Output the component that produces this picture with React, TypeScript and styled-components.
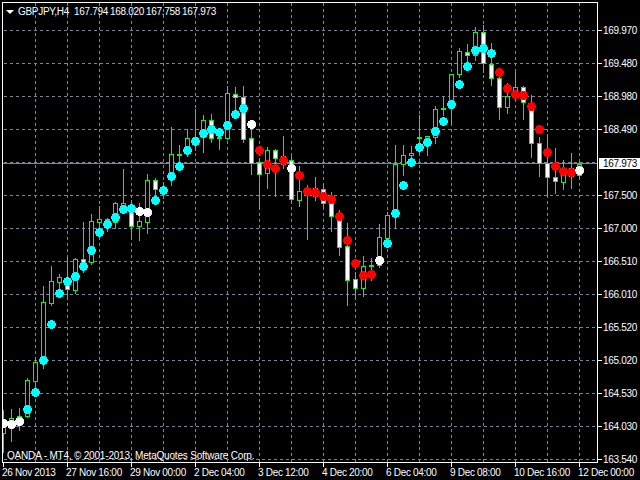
import React from "react";
import styled, { createGlobalStyle } from "styled-components";

const Global = createGlobalStyle`
  html, body { margin: 0; padding: 0; background: #000; }
  #root { width: 640px; height: 480px; overflow: hidden; }
`;

const Terminal = styled.div`
  width: 640px;
  height: 480px;
  background: #000;
  color: #fff;
  display: grid;
  grid-template-columns: 598px 42px;
  grid-template-rows: 463px 17px;
  font-family: "Liberation Sans", Arial, sans-serif;
  font-size: 10px;
  line-height: 11px;
  letter-spacing: -0.3px;
  overflow: hidden;
`;

const Plot = styled.div`
  position: relative;
  margin: 2px 0 0 2px;
  border: 1px solid #fff;
  width: 594px;
  height: 459px;
`;

const PlotSvg = styled.svg`
  display: block;
`;

const Legend = styled.div`
  position: absolute;
  left: 3px;
  top: 3px;
  display: flex;
  align-items: center;
  white-space: nowrap;
`;

const Triangle = styled.span`
  width: 0;
  height: 0;
  border-left: 4px solid transparent;
  border-right: 4px solid transparent;
  border-top: 4px solid #fff;
  margin-right: 4px;
`;

const Symbol = styled.span`
  width: 56px;
`;

const Quote = styled.span`
  width: 36px;
`;

const Copyright = styled.div`
  position: absolute;
  left: 4px;
  bottom: 1px;
  white-space: nowrap;
  letter-spacing: -0.19px;
`;

const PriceAxis = styled.div`
  display: flex;
  flex-direction: column;
  padding-top: 14px;
`;

const PriceRow = styled.div<{ $current?: boolean }>`
  height: 33px;
  flex: none;
  box-sizing: border-box;
  display: flex;
  align-items: center;
  padding-top: ${(p) => (p.$current ? "2px" : "0")};
`;

const PriceTick = styled.span`
  width: 4px;
  height: 1px;
  background: #fff;
  margin-right: 1px;
  flex: none;
`;

const PriceLabel = styled.span``;

const CurrentPrice = styled.span`
  margin-left: 1px;
  width: 41px;
  height: 11px;
  padding-left: 4px;
  box-sizing: border-box;
  background: #fff;
  color: #000;
`;

const TimeAxis = styled.div`
  grid-column: 1 / span 2;
  display: flex;
  padding-left: 3px;
`;

const TimeCell = styled.div`
  width: 64px;
  flex: none;
  display: flex;
  flex-direction: column;
`;

const TimeTick = styled.span`
  width: 1px;
  height: 4px;
  background: #fff;
`;

const TimeLabel = styled.span`
  margin: 0 0 0 -1px;
  white-space: nowrap;
`;

type Row = [number, number, number, number, "h" | "w", number, "c" | "r" | "w"];

// high, low, body top, body bottom, body kind, marker y, marker colour
const bars: Row[] = [
  [410, 452, 420, 433, "h", 423, "w"],
  [409, 441, 418, 428, "h", 424, "w"],
  [408, 430, 416, 425, "h", 421, "w"],
  [378, 417, 380, 416, "h", 409, "c"],
  [357, 392, 362, 381, "h", 392, "c"],
  [286, 368, 302, 363, "h", 360, "c"],
  [266, 305, 281, 303, "h", 324, "c"],
  [274, 293, 277, 282, "h", 293, "c"],
  [257, 299, 284, 289, "w", 281, "c"],
  [258, 293, 259, 290, "h", 276, "c"],
  [222, 272, 259, 262, "w", 266, "c"],
  [214, 264, 221, 262, "h", 250, "c"],
  [206, 235, 219, 222, "h", 232, "c"],
  [218, 231, 219, 227, "h", 224, "c"],
  [202, 228, 203, 222, "h", 217, "c"],
  [169, 210, 203, 205, "h", 209, "c"],
  [200, 239, 205, 226, "w", 208, "c"],
  [203, 240, 221, 226, "h", 211, "w"],
  [174, 233, 180, 222, "h", 212, "w"],
  [178, 197, 180, 189, "w", 200, "c"],
  [182, 198, 188, 192, "h", 190, "c"],
  [127, 185, 154, 172, "h", 176, "c"],
  [145, 170, 154, 155, "h", 166, "c"],
  [129, 156, 138, 150, "h", 150, "c"],
  [109, 150, 137, 138, "h", 141, "c"],
  [115, 152, 120, 137, "h", 133, "c"],
  [114, 142, 120, 138, "w", 129, "c"],
  [128, 149, 137, 138, "h", 132, "c"],
  [86, 139, 93, 138, "h", 125, "c"],
  [87, 114, 94, 97, "w", 114, "c"],
  [86, 142, 97, 139, "w", 108, "c"],
  [120, 174, 138, 163, "w", 124, "w"],
  [158, 208, 162, 174, "w", 150, "r"],
  [147, 188, 150, 173, "h", 164, "r"],
  [149, 196, 150, 158, "w", 168, "r"],
  [136, 168, 156, 164, "h", 160, "r"],
  [156, 203, 160, 199, "w", 168, "w"],
  [166, 206, 191, 200, "h", 175, "r"],
  [185, 239, 188, 194, "h", 191, "r"],
  [177, 200, 188, 196, "h", 192, "r"],
  [183, 207, 189, 203, "w", 196, "r"],
  [192, 231, 203, 216, "w", 199, "r"],
  [210, 255, 219, 247, "w", 216, "r"],
  [223, 305, 246, 280, "w", 240, "r"],
  [272, 299, 279, 288, "w", 263, "r"],
  [256, 296, 266, 288, "h", 275, "r"],
  [258, 280, 265, 266, "h", 274, "r"],
  [224, 267, 237, 265, "h", 260, "w"],
  [212, 245, 215, 238, "h", 243, "c"],
  [145, 228, 164, 210, "h", 213, "c"],
  [145, 175, 155, 164, "h", 185, "c"],
  [146, 165, 153, 155, "h", 162, "c"],
  [115, 152, 137, 138, "h", 147, "c"],
  [136, 155, 136, 138, "h", 142, "c"],
  [106, 143, 109, 137, "h", 131, "c"],
  [96, 115, 108, 109, "h", 121, "c"],
  [74, 124, 74, 108, "h", 104, "c"],
  [48, 77, 51, 74, "h", 84, "c"],
  [44, 66, 52, 55, "w", 66, "c"],
  [27, 60, 32, 55, "h", 50, "c"],
  [25, 72, 32, 63, "w", 48, "c"],
  [43, 85, 64, 78, "w", 53, "c"],
  [68, 119, 78, 107, "w", 72, "r"],
  [83, 113, 96, 107, "h", 88, "r"],
  [72, 97, 87, 95, "h", 94, "r"],
  [86, 119, 87, 102, "w", 95, "r"],
  [95, 157, 107, 143, "w", 106, "r"],
  [137, 176, 143, 163, "w", 129, "r"],
  [134, 196, 163, 177, "w", 152, "r"],
  [148, 193, 177, 181, "w", 166, "r"],
  [160, 189, 175, 182, "h", 171, "r"],
  [153, 188, 168, 176, "h", 172, "r"],
  [161, 179, 164, 175, "h", 170, "w"],
];

const dotFill = { c: "#00ffff", r: "#ff0000", w: "#ffffff" };
const GRID = "#778899";

const levels = [30, 63, 96, 129, 162, 195, 228, 261, 294, 327, 360, 393, 426, 459];
const columns = Array.from({ length: 18 }, (_, i) => 35 + 32 * i);

const Chart = () => (
  <PlotSvg width={594} height={459} viewBox="3 3 594 459" shapeRendering="crispEdges">
    <g stroke={GRID} strokeWidth={1} strokeDasharray="3 3">
      {levels.map((y) => (
        <line key={y} x1={4} x2={597} y1={y + 0.5} y2={y + 0.5} />
      ))}
      {columns.map((x) => (
        <line key={x} x1={x + 0.5} x2={x + 0.5} y1={3} y2={462} />
      ))}
    </g>
    <line x1={3} x2={597} y1={163.5} y2={163.5} stroke={GRID} />
    {bars.map(([hi, lo, top, bottom, kind], i) => {
      const x = 3 + 8 * i;
      return (
        <g key={x}>
          <line x1={x + 0.5} x2={x + 0.5} y1={hi} y2={lo + 1} stroke="#00ff00" />
          <rect
            x={x - 1.5}
            y={top + 0.5}
            width={4}
            height={bottom - top}
            fill={kind === "w" ? "#fff" : "#000"}
            stroke="#00ff00"
          />
        </g>
      );
    })}
    {bars.map(([, , , , , y, c], i) =>
      c === "w" ? (
        <circle key={`f${i}`} cx={4 + 8 * i} cy={y + 0.5} r={4.4} fill="#ffb090" />
      ) : null
    )}
    {bars.map(([, , , , , y, c], i) => (
      <circle key={i} cx={3.5 + 8 * i} cy={y + 0.5} r={4.4} fill={dotFill[c]} />
    ))}
  </PlotSvg>
);

const prices: { text: string; current?: boolean }[] = [
  { text: "169.970" },
  { text: "169.480" },
  { text: "168.980" },
  { text: "168.490" },
  { text: "167.973", current: true },
  { text: "167.500" },
  { text: "167.000" },
  { text: "166.510" },
  { text: "166.010" },
  { text: "165.520" },
  { text: "165.020" },
  { text: "164.530" },
  { text: "164.030" },
  { text: "163.540" },
];

const times = [
  "26 Nov 2013",
  "27 Nov 16:00",
  "29 Nov 00:00",
  "2 Dec 04:00",
  "3 Dec 12:00",
  "4 Dec 20:00",
  "6 Dec 04:00",
  "9 Dec 08:00",
  "10 Dec 16:00",
  "12 Dec 00:00",
];

export default function App() {
  return (
    <>
      <Global />
      <Terminal>
        <Plot>
          <Chart />
          <Legend>
            <Triangle />
            <Symbol>GBPJPY,H4</Symbol>
            {["167.794", "168.020", "167.758", "167.973"].map((q, i) => (
              <Quote key={i}>{q}</Quote>
            ))}
          </Legend>
          <Copyright>OANDA - MT4, © 2001-2013, MetaQuotes Software Corp.</Copyright>
        </Plot>
        <PriceAxis>
          {prices.map((p) =>
            p.current ? (
              <PriceRow key={p.text} $current>
                <CurrentPrice>{p.text}</CurrentPrice>
              </PriceRow>
            ) : (
              <PriceRow key={p.text}>
                <PriceTick />
                <PriceLabel>{p.text}</PriceLabel>
              </PriceRow>
            )
          )}
        </PriceAxis>
        <TimeAxis>
          {times.map((t) => (
            <TimeCell key={t}>
              <TimeTick />
              <TimeLabel>{t}</TimeLabel>
            </TimeCell>
          ))}
        </TimeAxis>
      </Terminal>
    </>
  );
}
